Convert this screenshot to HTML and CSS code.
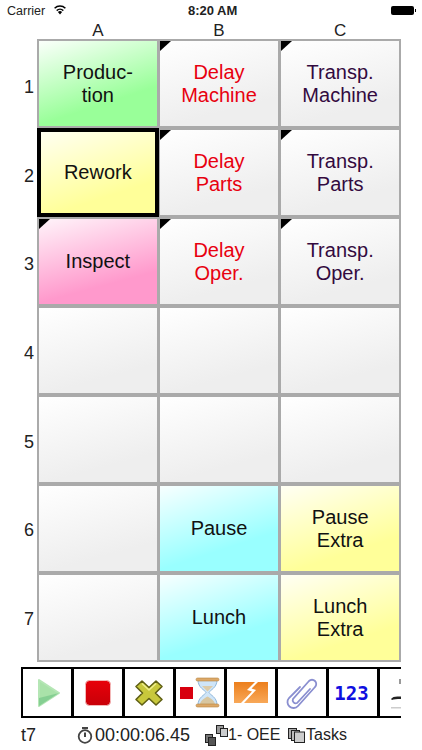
FILE: index.html
```html
<!DOCTYPE html>
<html lang="en">
<head>
    <meta charset="UTF-8">
    <meta name="viewport" content="width=device-width, initial-scale=1.0">
    <title>Work Sampling</title>
    <link rel="stylesheet" href="styles.css">
</head>
<body>
    <div class="status-bar">
        <div class="status-left">
            <span>Carrier</span>
            <svg class="wifi" width="14" height="11" viewBox="0 0 14 11">
                <path d="M7 10.5L4.9 8a3 3 0 0 1 4.2 0z" fill="#000"/>
                <path d="M3.7 6.6a4.8 4.8 0 0 1 6.6 0" fill="none" stroke="#000" stroke-width="1.5"/>
                <path d="M1.6 4.2a7.8 7.8 0 0 1 10.8 0" fill="none" stroke="#000" stroke-width="1.5"/>
            </svg>
        </div>
        <div class="status-time">8:20 AM</div>
        <div class="battery"><div class="battery-body"></div><div class="battery-tip"></div></div>
    </div>

    <div class="col-labels">
        <div>A</div>
        <div>B</div>
        <div>C</div>
    </div>

    <div class="sheet">
        <div class="row-labels">
            <div>1</div><div>2</div><div>3</div><div>4</div><div>5</div><div>6</div><div>7</div>
        </div>
        <div class="cells">
            <div class="cell green">Produc-<br>tion</div>
            <div class="cell grey flag red-text">Delay<br>Machine</div>
            <div class="cell grey flag purple-text">Transp.<br>Machine</div>

            <div class="cell yellow selected">Rework</div>
            <div class="cell grey flag red-text">Delay<br>Parts</div>
            <div class="cell grey flag purple-text">Transp.<br>Parts</div>

            <div class="cell pink flag">Inspect</div>
            <div class="cell grey flag red-text">Delay<br>Oper.</div>
            <div class="cell grey flag purple-text">Transp.<br>Oper.</div>

            <div class="cell grey"></div>
            <div class="cell grey"></div>
            <div class="cell grey"></div>

            <div class="cell grey"></div>
            <div class="cell grey"></div>
            <div class="cell grey"></div>

            <div class="cell grey"></div>
            <div class="cell cyan">Pause</div>
            <div class="cell yellow">Pause<br>Extra</div>

            <div class="cell grey"></div>
            <div class="cell cyan">Lunch</div>
            <div class="cell yellow">Lunch<br>Extra</div>
        </div>
    </div>

    <div class="toolbar">
        <div class="tool tool-play">
            <svg width="24" height="30" viewBox="0 0 24 30">
                <path d="M2 2L22 15L2 28z" fill="#a9e2a9" stroke="#b5e6b5" stroke-width="2" stroke-linejoin="round"/>
                <path d="M2 20L22 15L2 28z" fill="#85cf92"/>
            </svg>
        </div>
        <div class="tool">
            <svg width="26" height="26" viewBox="0 0 26 26">
                <defs>
                    <linearGradient id="redFill" x1="0" y1="0" x2="0" y2="1">
                        <stop offset="0" stop-color="#e8000a"/>
                        <stop offset="1" stop-color="#c80008"/>
                    </linearGradient>
                </defs>
                <rect x="0.5" y="0.5" width="25" height="25" rx="4" fill="url(#redFill)" stroke="#f3b8b8"/>
            </svg>
        </div>
        <div class="tool">
            <svg width="30" height="28" viewBox="0 0 30 28">
                <path d="M8 2L15 8.5L22 2L28 7.500L21.500 14L28 20.500L22 26L15 19.500L8 26L2 20.500L8.500 14L2 7.500z" fill="#c8c83c" stroke="#5f5f14" stroke-width="1.6" stroke-linejoin="round"/>
                <path d="M8 4.500L15 11L22 4.500" fill="none" stroke="#eeee8c" stroke-width="1.6"/>
            </svg>
        </div>
        <div class="tool tool-timer">
            <div class="mini-stop"></div>
            <svg width="25" height="31" viewBox="0 0 25 31">
                <path d="M3 3H22C22 11 15 13 14 15.500C15 18 22 20 22 28H3C3 20 10 18 11 15.500C10 13 3 11 3 3z" fill="#cfe5f8" stroke="#8fb8dc"/>
                <path d="M7 9H18L12.500 14.500z" fill="#dccba8"/>
                <path d="M5 27C6 23 10 21 12.500 19.500C15 21 19 23 20 27z" fill="#d8c6a0"/>
                <rect x="1" y="1" width="23" height="3" rx="1.500" fill="#dca868" stroke="#b58442" stroke-width="0.6"/>
                <rect x="1" y="27" width="23" height="3" rx="1.500" fill="#dca868" stroke="#b58442" stroke-width="0.6"/>
            </svg>
        </div>
        <div class="tool">
            <svg width="34" height="21" viewBox="0 0 34 21">
                <defs>
                    <linearGradient id="orangeFill" x1="0" y1="0" x2="0" y2="1">
                        <stop offset="0" stop-color="#ec7f1c"/>
                        <stop offset="1" stop-color="#f8a858"/>
                    </linearGradient>
                </defs>
                <rect x="0" y="0" width="34" height="21" fill="url(#orangeFill)"/>
                <path d="M21 0L13 8L18 9.500L7 21H10L22 8L17.500 6.500L24 0z" fill="#fff"/>
            </svg>
        </div>
        <div class="tool">
            <svg width="34" height="34" viewBox="0 0 34 34">
                <path d="M25 13L12 27A3 3 0 0 1 8 23L24 5A4.200 4.200 0 0 1 30 11L13 30A6 6 0 0 1 4 22L15 11" fill="none" stroke="#8a8fd0" stroke-width="1.800" stroke-linecap="round"/>
            </svg>
        </div>
        <div class="tool tool-num">123</div>
        <div class="tool tool-cut">
            <svg width="24" height="47" viewBox="0 0 24 47">
                <rect x="19" y="10" width="2" height="5" fill="#999"/>
                <path d="M11 30C13 27 17 27 24 28V30C18 30 14 30 12 31z" fill="#222"/>
                <rect x="11" y="38" width="13" height="1.500" fill="#ccc"/>
            </svg>
        </div>
    </div>

    <div class="info-bar">
        <span class="info-name">t7</span>
        <span class="info-item info-timer">
            <svg width="16" height="17" viewBox="0 0 16 17">
                <rect x="5" y="0" width="6" height="2" fill="#444"/>
                <circle cx="8" cy="9.500" r="6.300" fill="none" stroke="#444" stroke-width="1.800"/>
                <path d="M8 5.500V10" stroke="#444" stroke-width="2"/>
            </svg>
            00:00:06.45
        </span>
        <span class="info-item info-oee">
            <svg width="23" height="21" viewBox="0 0 23 21">
                <rect x="0.500" y="9.500" width="7" height="8" fill="#777" stroke="#222"/>
                <rect x="3.500" y="12.500" width="7" height="8" fill="#555" stroke="#222"/>
                <rect x="11.500" y="0.500" width="7" height="8" fill="#999" stroke="#222"/>
                <rect x="15.500" y="3.500" width="7" height="8" fill="#ccc" stroke="#222"/>
            </svg>
            1- OEE
        </span>
        <span class="info-item info-tasks">
            <svg width="17" height="15" viewBox="0 0 17 15">
                <rect x="0.500" y="0.500" width="8" height="10" fill="#aaa" stroke="#222"/>
                <rect x="3.500" y="2.500" width="8" height="10" fill="#bbb" stroke="#222"/>
                <rect x="6.500" y="4" width="10" height="10.500" fill="#ccc" stroke="#222"/>
            </svg>
            Tasks
        </span>
    </div>
</body>
</html>
```

FILE: styles.css
```css
html, body {
    margin: 0;
    padding: 0;
}
body {
    width: 422px;
    height: 750px;
    overflow: hidden;
    background: #fff;
    color: #000;
    font-family: "Liberation Sans", Arial, sans-serif;
}

/* status bar */
.status-bar {
    height: 21px;
    padding: 0 7px;
    display: flex;
    justify-content: space-between;
    align-items: center;
    font-size: 12.5px;
    color: #222;
}
.status-left {
    display: flex;
    align-items: center;
    gap: 8px;
}
.wifi {
    margin-top: -3px;
}
.status-time {
    font-size: 13px;
    font-weight: bold;
    color: #222;
    margin-left: -33px;
}
.battery {
    display: flex;
    align-items: center;
    margin-right: -1px;
}
.battery-body {
    width: 23px;
    height: 9px;
    background: #000;
    border-radius: 2px;
}
.battery-tip {
    width: 1px;
    height: 3px;
    margin-left: 1px;
    background: #000;
}

/* column and row labels */
.col-labels {
    height: 18px;
    padding-left: 39px;
    display: flex;
    gap: 3.5px;
    font-size: 17px;
    line-height: 19px;
    color: #222;
}
.col-labels div {
    width: 117.67px;
    text-align: center;
}
.sheet {
    display: flex;
}
.row-labels {
    width: 37px;
    padding: 6px 0 0;
    box-sizing: border-box;
    height: 623px;
    display: grid;
    grid-template-rows: repeat(7, 1fr);
    row-gap: 4px;
    font-size: 18px;
    color: #222;
}
.row-labels div {
    display: flex;
    align-items: center;
    justify-content: flex-end;
    padding-right: 3px;
}

/* the grid of task buttons */
.cells {
    width: 364px;
    height: 623px;
    box-sizing: border-box;
    padding: 2px;
    background: #aaa;
    display: grid;
    grid-template-columns: repeat(3, 1fr);
    grid-template-rows: repeat(7, 1fr);
    gap: 4px 3.5px;
}
.cell {
    position: relative;
    display: flex;
    align-items: center;
    justify-content: center;
    text-align: center;
    font-size: 20px;
    line-height: 23px;
    color: #111;
}
.flag::before {
    content: "";
    position: absolute;
    top: 0;
    left: 0;
    border-top: 10px solid #000;
    border-right: 11px solid transparent;
}
.selected {
    outline: 4px solid #000;
    outline-offset: -2px;
    z-index: 1;
}
.green { background: linear-gradient(162deg, #fbfffb 0%, #99ff99 68%); }
.yellow { background: linear-gradient(162deg, #fffff4 0%, #ffff99 72%); }
.pink { background: linear-gradient(165deg, #fff4fa 0%, #ff99cc 72%); }
.cyan { background: linear-gradient(162deg, #f8ffff 0%, #99ffff 68%); }
.grey { background: linear-gradient(165deg, #fff 0%, #eee 75%); }
.red-text { color: #e8000f; }
.purple-text { color: #330a3f; }

/* toolbar */
.toolbar {
    margin: 5px 0 0 21px;
    width: 380px;
    height: 51px;
    box-sizing: border-box;
    border-top: 2px solid #000;
    border-bottom: 2px solid #000;
    display: flex;
    overflow: hidden;
}
.tool {
    flex: 0 0 51px;
    box-sizing: border-box;
    border-left: 3px solid #000;
    display: flex;
    align-items: center;
    justify-content: center;
}
.tool:first-child {
    flex-basis: 50px;
    border-left-width: 2px;
}
.tool-play {
    padding-left: 3px;
}
.tool-timer {
    gap: 2px;
}
.mini-stop {
    width: 13px;
    height: 12px;
    background: #d8000f;
}
.tool-num {
    padding-right: 3px;
    color: #0f0fe0;
    font-family: "DejaVu Sans Mono", monospace;
    font-weight: bold;
    font-size: 19px;
}
.tool-cut {
    flex-basis: 27px;
    justify-content: flex-start;
}

/* bottom info */
.info-bar {
    height: 34px;
    padding-left: 21px;
    display: flex;
    align-items: center;
    font-size: 18px;
    color: #222;
}
.info-item {
    display: flex;
    align-items: center;
}
.info-name {
    width: 56px;
}
.info-timer {
    gap: 2px;
    width: 128px;
}
.info-oee {
    width: 83px;
    font-size: 16px;
}
.info-tasks {
    gap: 1px;
    font-size: 16px;
}
```
